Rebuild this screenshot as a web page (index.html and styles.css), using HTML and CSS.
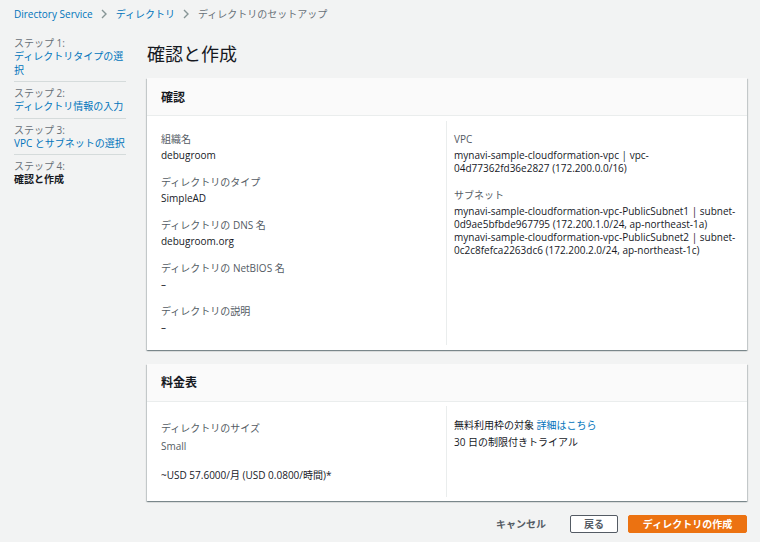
FILE: index.html
```html
<!DOCTYPE html>
<html lang="ja">
<head>
<meta charset="utf-8">
<title>ディレクトリのセットアップ</title>
<link rel="stylesheet" href="styles.css">
</head>
<body>
<nav class="breadcrumb">
  <a class="crumb-link" href="#">Directory Service</a>
  <svg class="chev" width="8" height="10" viewBox="0 0 8 10"><path d="M2 1 L6 5 L2 9" fill="none" stroke="#879596" stroke-width="1.4"/></svg>
  <a class="crumb-link" href="#">ディレクトリ</a>
  <svg class="chev" width="8" height="10" viewBox="0 0 8 10"><path d="M2 1 L6 5 L2 9" fill="none" stroke="#879596" stroke-width="1.4"/></svg>
  <span class="crumb-current">ディレクトリのセットアップ</span>
</nav>
<div class="layout">
  <ul class="steps">
    <li class="step"><div class="step-label">ステップ 1:</div><a class="step-link" href="#">ディレクトリタイプの選択</a></li>
    <li class="step"><div class="step-label">ステップ 2:</div><a class="step-link" href="#">ディレクトリ情報の入力</a></li>
    <li class="step"><div class="step-label">ステップ 3:</div><a class="step-link" href="#">VPC とサブネットの選択</a></li>
    <li class="step"><div class="step-label">ステップ 4:</div><span class="step-current">確認と作成</span></li>
  </ul>
  <main class="content">
    <h1 class="title">確認と作成</h1>
    <section class="panel">
      <div class="panel-header">確認</div>
      <div class="panel-body">
        <div class="col">
          <div class="item"><div class="label">組織名</div><div class="value">debugroom</div></div>
          <div class="item"><div class="label">ディレクトリのタイプ</div><div class="value">SimpleAD</div></div>
          <div class="item"><div class="label">ディレクトリの DNS 名</div><div class="value">debugroom.org</div></div>
          <div class="item"><div class="label">ディレクトリの NetBIOS 名</div><div class="value">–</div></div>
          <div class="item"><div class="label">ディレクトリの説明</div><div class="value">–</div></div>
        </div>
        <div class="col col-right">
          <div class="item"><div class="label">VPC</div><div class="value nowrap">mynavi-sample-cloudformation-vpc | vpc-<br>04d77362fd36e2827 (172.200.0.0/16)</div></div>
          <div class="item"><div class="label">サブネット</div><div class="value nowrap">mynavi-sample-cloudformation-vpc-PublicSubnet1 | subnet-<br>0d9ae5bfbde967795 (172.200.1.0/24, ap-northeast-1a)<br>mynavi-sample-cloudformation-vpc-PublicSubnet2 | subnet-<br>0c2c8fefca2263dc6 (172.200.2.0/24, ap-northeast-1c)</div></div>
        </div>
      </div>
    </section>
    <section class="panel panel-price">
      <div class="panel-header">料金表</div>
      <div class="panel-body price-body">
        <div class="col price-left">
          <div class="label">ディレクトリのサイズ</div>
          <div class="price-size">Small</div>
          <div class="price-cost">~USD 57.6000/月 (USD 0.0800/時間)*</div>
        </div>
        <div class="col col-right price-right">
          <div class="price-line">無料利用枠の対象 <a class="link" href="#">詳細はこちら</a></div>
          <div class="price-line">30 日の制限付きトライアル</div>
        </div>
      </div>
    </section>
    <div class="actions">
      <button class="btn btn-cancel">キャンセル</button>
      <button class="btn btn-back">戻る</button>
      <button class="btn btn-primary">ディレクトリの作成</button>
    </div>
  </main>
</div>
</body>
</html>
```

FILE: styles.css
```css
* { box-sizing: border-box; }
html, body { margin: 0; padding: 0; }
body {
  background: #f2f3f3;
  font-family: "Open Sans", "Noto Sans CJK JP", sans-serif;
  font-size: 10px;
  color: #16191f;
  width: 760px;
  height: 542px;
  overflow: hidden;
}
a { text-decoration: none; }

.breadcrumb {
  display: flex;
  align-items: center;
  height: 14px;
  line-height: 14px;
  margin-top: 7px;
  padding: 0 14px;
  gap: 6px;
}
.crumb-link { color: #0073bb; }
.crumb-current { color: #687078; }
.chev { display: block; margin: 0 1.5px; }

.layout {
  display: grid;
  grid-template-columns: 112px 600px;
  column-gap: 21px;
  padding: 0 14px;
  margin-top: 16px;
}

.steps { list-style: none; margin: 0; padding: 0; }
.step {
  padding: 5px 0 4px;
  border-bottom: 1px solid #d5dbdb;
}
.step:first-child { padding-top: 0; }
.step:last-child { border-bottom: none; }
.step-label { color: #687078; line-height: 13px; }
.step-link { display: block; color: #0073bb; line-height: 13.5px; }
.step-current { display: block; font-weight: 700; line-height: 13.5px; }

.title {
  margin: 5px 0 0;
  font-size: 18px;
  font-weight: 400;
  line-height: 24px;
}

.panel {
  background: #fff;
  margin-top: 12px;
  box-shadow: 0 1px 1px 0 rgba(0,28,36,.3), 1px 1px 1px 0 rgba(0,28,36,.15), -1px 1px 1px 0 rgba(0,28,36,.15);
}
.panel-price { margin-top: 14px; }
.panel-header {
  height: 38px;
  display: flex;
  align-items: center;
  padding: 0 14px;
  background: #fafafa;
  border-bottom: 1px solid #eaeded;
  font-size: 12px;
  font-weight: 700;
}
.panel-body {
  display: grid;
  grid-template-columns: 299px 1fr;
  padding: 5px 0;
}
.col {
  display: flex;
  flex-direction: column;
  gap: 12.5px;
  padding: 10px 14px 11px;
}
.col-right {
  border-left: 1px solid #eaeded;
  padding-left: 7px;
}
.label { color: #545b64; line-height: 16px; }
.value { margin-top: 1.5px; line-height: 13px; }
.nowrap { white-space: nowrap; }

.price-body { padding: 4px 0 4px; }
.price-left { gap: 0; padding: 14px 14px 14px; }
.price-size { margin-top: 2px; line-height: 16px; color: #545b64; }
.price-cost { margin-top: 13px; line-height: 16px; }
.price-right { gap: 0; padding-top: 11px; }
.price-line { line-height: 17px; }
.link { color: #0073bb; }

.actions {
  display: flex;
  justify-content: flex-end;
  align-items: center;
  margin-top: 14px;
  gap: 10px;
}
.btn {
  font-family: "Open Sans", "Noto Sans CJK JP", sans-serif;
  font-size: 10px;
  font-weight: 700;
  height: 18px;
  border-radius: 2px;
  padding: 0;
  line-height: 16px;
  cursor: pointer;
}
.btn-cancel {
  background: none;
  border: none;
  color: #545b64;
  margin-right: 14px;
}
.btn-back {
  width: 48px;
  background: #fff;
  border: 1px solid #545b64;
  color: #545b64;
}
.btn-primary {
  width: 119px;
  background: #ec7211;
  border: 1px solid #ec7211;
  color: #fff;
}
```
